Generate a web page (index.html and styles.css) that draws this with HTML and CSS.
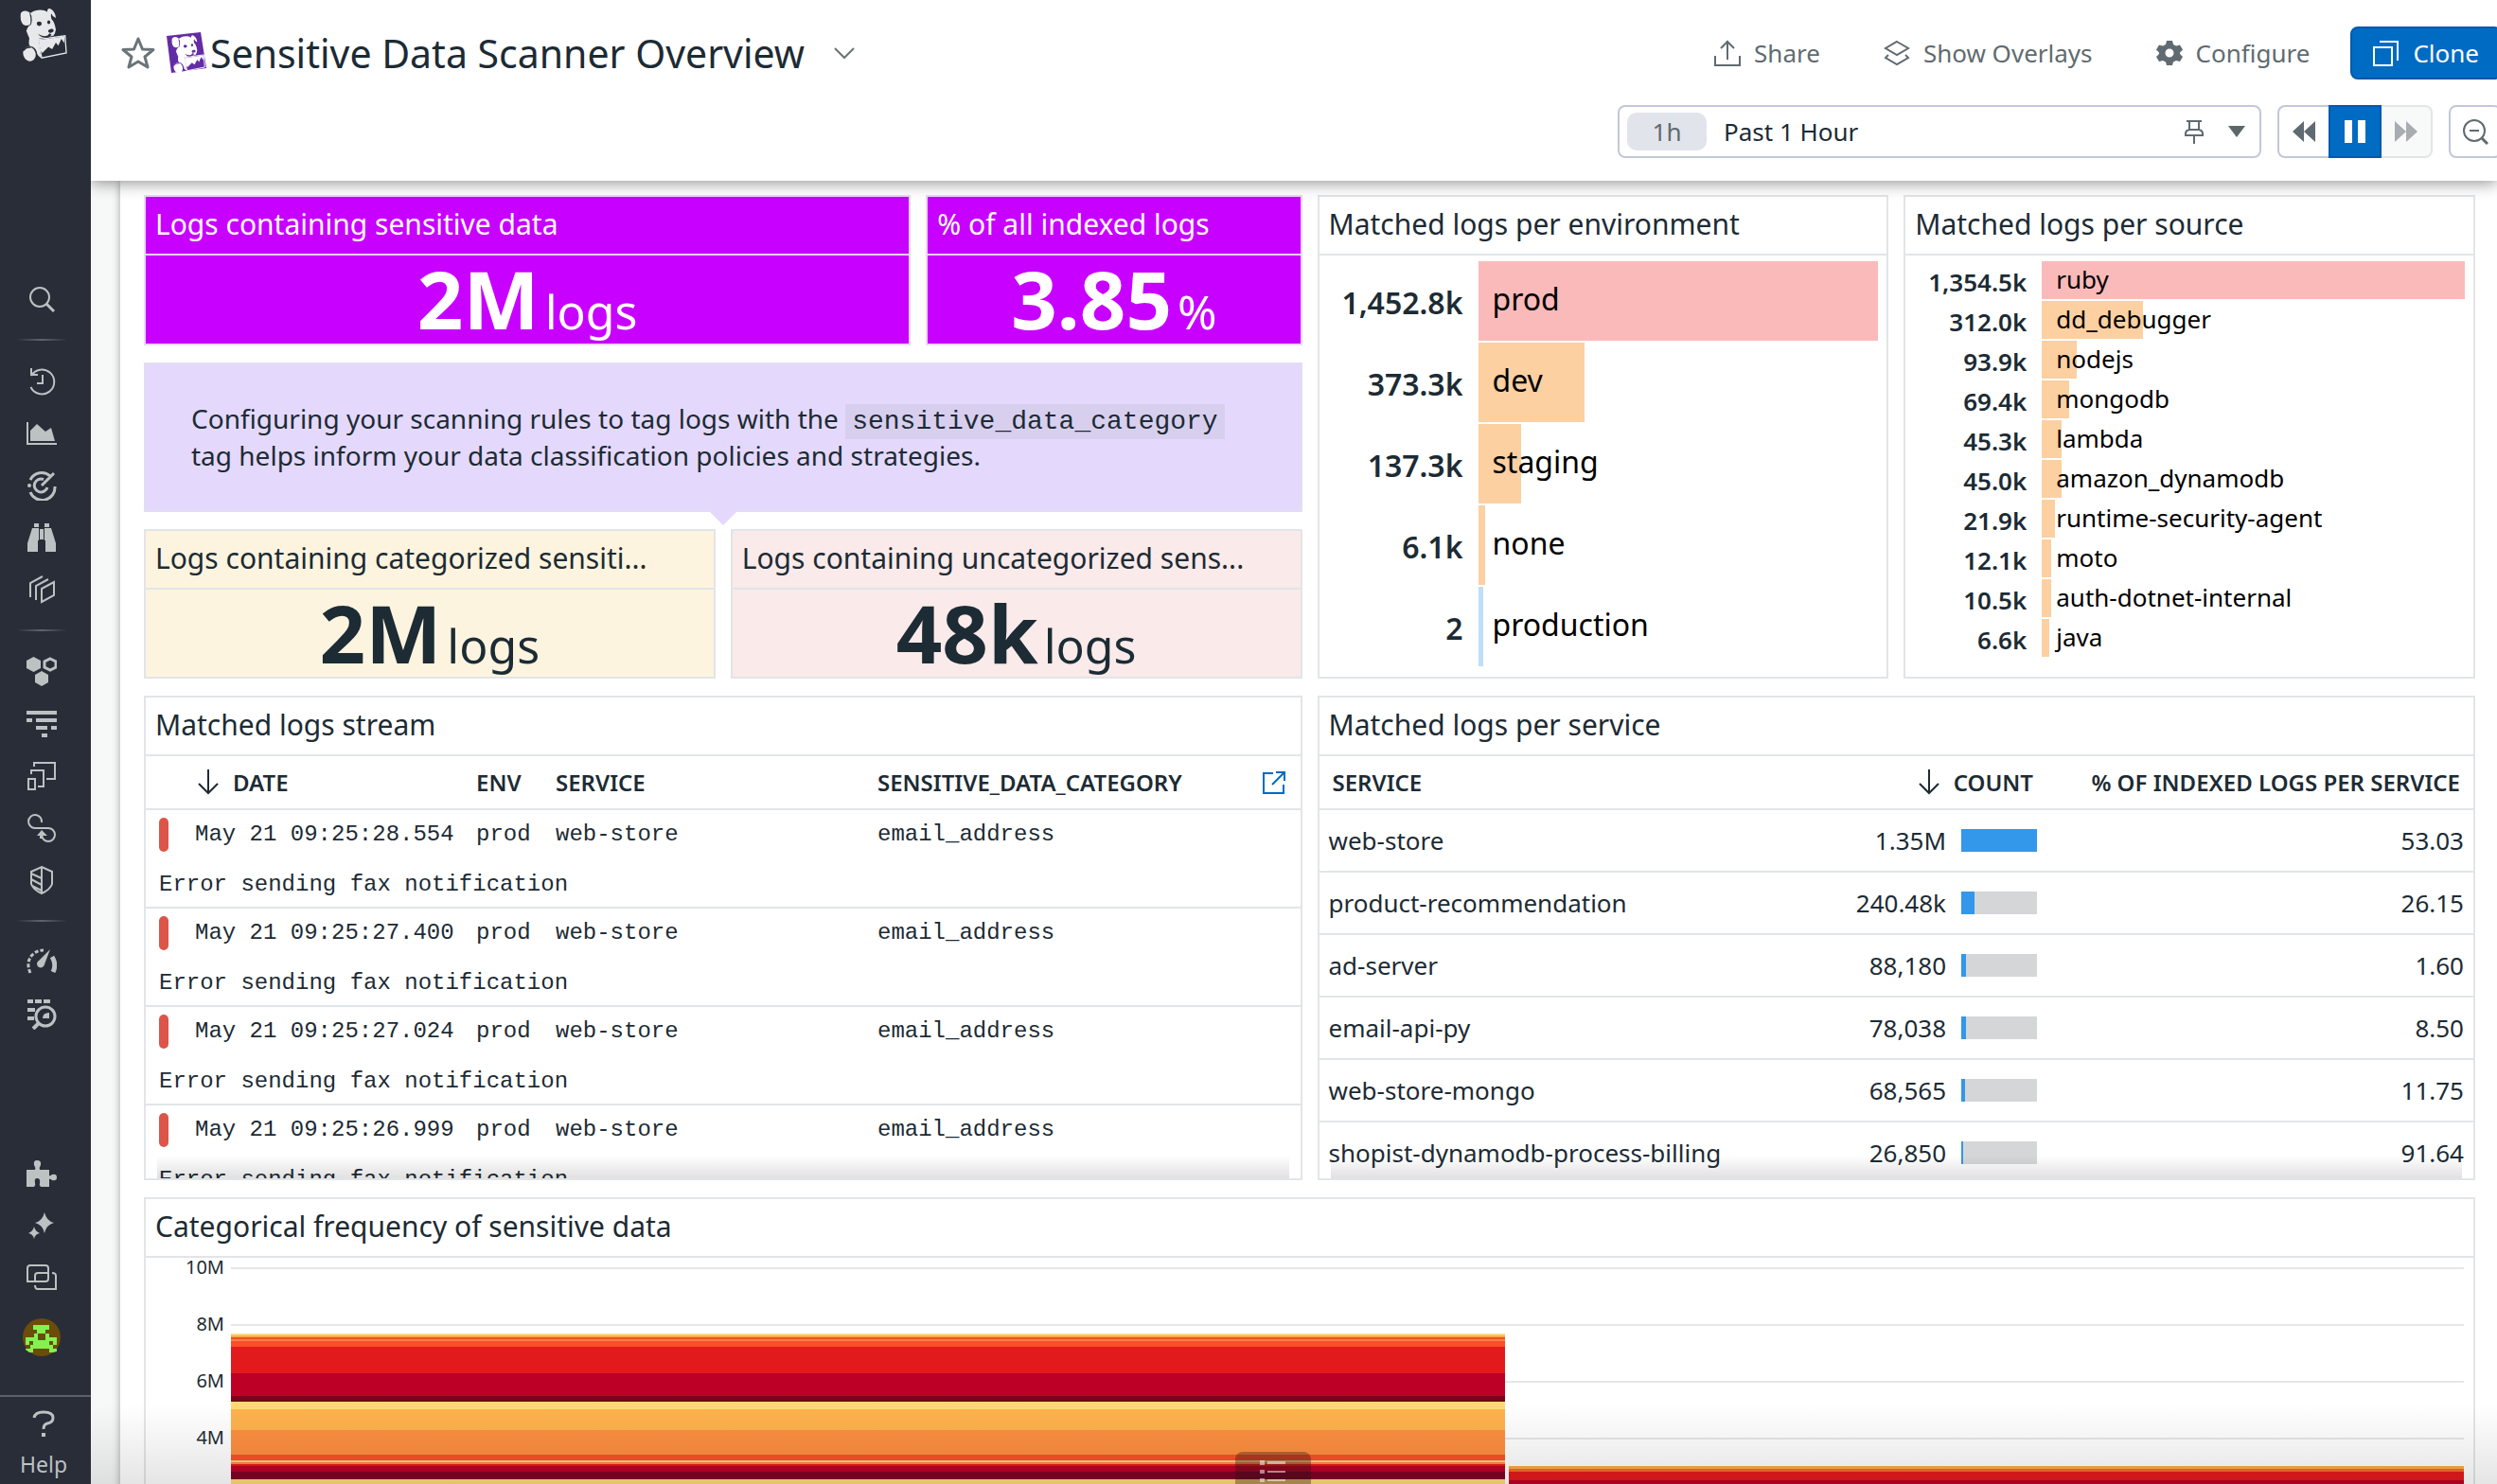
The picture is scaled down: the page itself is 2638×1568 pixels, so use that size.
FILE: index.html
```html
<!DOCTYPE html>
<html lang="en">
<head>
<meta charset="utf-8">
<title>Sensitive Data Scanner Overview</title>
<link rel="stylesheet" href="styles.css">
</head>
<body>
<svg class="defs" aria-hidden="true">
  <symbol id="dog" viewBox="60 18 160 180">
    <path fill="currentColor" d="M66 38Q74 28 86 32L98 38Q112 28 130 28Q144 28 152 34Q152 22 162 24Q178 32 180 54L170 48L166 40Q162 44 166 58Q176 66 180 92Q178 106 172 112L122 122L132 184Q118 176 118 164Q112 148 96 146Q90 138 94 120Q88 108 84 96Q88 84 96 76Q84 82 74 76Q62 62 66 38Z"/>
    <ellipse fill="currentColor" cx="94" cy="171" rx="20" ry="24" transform="rotate(-20 94 171)"/>
    <path fill="none" stroke="currentColor" stroke-width="4" d="M122 124L210 112L214 168L134 184Z"/>
    <path fill="currentColor" d="M124 126L208 114L207 136L198 122L188 144L180 134L168 156L156 148L136 168L130 160Z"/>
    <g class="dog-ink">
      <ellipse cx="126" cy="73" rx="8" ry="7"/>
      <ellipse cx="157" cy="68" rx="5" ry="6"/>
      <ellipse cx="164" cy="96" rx="9" ry="6" transform="rotate(-15 164 96)"/>
      <path d="M122 106Q136 116 152 112L160 104L166 108Q160 118 150 118Q132 120 122 106ZM94 36Q102 44 102 60Q102 76 94 80Q100 70 98 56Z"/>
      <path d="M72 160Q84 144 100 148L98 152Q84 150 76 162Z"/>
    </g>
  </symbol>
  <symbol id="arrow-down" viewBox="0 0 22 28"><path fill="none" stroke="currentColor" stroke-width="2" d="M11 1V26M1 16L11 26L21 16"/></symbol>
</svg>

<div class="app">
  <nav class="sidebar" aria-label="Main">
    <a class="brand" href="#" aria-label="Home"><svg class="brand-logo"><use href="#dog"/></svg></a>
    <div class="nav-group">
      <a class="nav-link" href="#" aria-label="Search"><svg viewBox="0 0 32 32"><circle class="ln" cx="14" cy="14" r="10"/><path class="ln3" d="M21 21L29 29"/></svg></a>
    </div>
    <div class="nav-group">
      <a class="nav-link" href="#" aria-label="Recent"><svg viewBox="0 0 32 32"><path class="ln" d="M5 10A13 13 0 1 1 4.500 22M17 9V18H11M5 2V9H12"/></svg></a>
      <a class="nav-link" href="#" aria-label="Dashboards"><svg viewBox="0 0 32 32"><path class="ln" d="M1 4V27H32"/><path d="M4 24V13L11 6L20 14L26 10L30 24Z"/></svg></a>
      <a class="nav-link" href="#" aria-label="Monitors"><svg viewBox="0 0 32 32"><path class="ln3" d="M4 10A13.500 13.500 0 0 1 25 6M30 17A13.500 13.500 0 0 1 4 23M22 18A7 7 0 1 1 18 9.500M16 16L29 3"/><circle cx="3" cy="16" r="2"/></svg></a>
      <a class="nav-link" href="#" aria-label="Watchdog"><svg viewBox="0 0 32 32"><path d="M8 1H13V5H8ZM19 1H24V5H19ZM6 6H13V19H12V31H1V22ZM26 6H19V19H20V31H31V22ZM14 7H18V18H14Z"/></svg></a>
      <a class="nav-link" href="#" aria-label="Service catalog"><svg viewBox="0 0 32 32"><path class="ln" d="M4 24V9L17 2M10 27V12L23 5M16 15L29 8V22L16 29Z"/></svg></a>
    </div>
    <div class="nav-group">
      <a class="nav-link" href="#" aria-label="Infrastructure"><svg viewBox="0 0 32 32"><path d="M7.500 0L15 4V12L7.500 16L0 12V4ZM16 15L23 19V27L16 31L9 27V19Z"/><path class="ln3" d="M25 2L31 5V11L25 14L19 11V5Z"/></svg></a>
      <a class="nav-link" href="#" aria-label="APM"><svg viewBox="0 0 32 32"><path d="M0 2H32V6H0ZM0 10H6V14H0ZM10 10H32V14H10ZM10 18H22V22H10ZM26 18H32V22H26ZM16 26H22V30H16Z"/></svg></a>
      <a class="nav-link" href="#" aria-label="Digital experience"><svg viewBox="0 0 32 32"><path class="ln" d="M8 6V2H30V19H21M5 14V10H18V27H12M2 19H9V30H2Z"/></svg></a>
      <a class="nav-link" href="#" aria-label="CI"><svg viewBox="0 0 32 32"><path class="ln" d="M16 10A7 7 0 1 0 9 16H23A7 7 0 1 1 16 23"/><path d="M11 24L16 18L22 24H17L18 27H14V24Z"/></svg></a>
      <a class="nav-link" href="#" aria-label="Security"><svg viewBox="0 0 32 32"><path class="ln" d="M16 2L27 7V20Q25 26 16 30Q7 26 5 20V7ZM16 2V30M5 9L16 14M5 15L16 21M6 22L16 27"/></svg></a>
    </div>
    <div class="nav-group">
      <a class="nav-link" href="#" aria-label="Metrics"><svg viewBox="0 0 32 32"><path fill="none" stroke="currentColor" stroke-width="3" stroke-dasharray="4 2" d="M4 27Q-1 16 6 8Q11 3 18 3"/><path d="M25 2L19 18A4 4 0 1 1 13 14Z"/><path fill="none" stroke="currentColor" stroke-width="5" d="M27 10Q32 18 28 26"/></svg></a>
      <a class="nav-link" href="#" aria-label="Logs"><svg viewBox="0 0 32 32"><path d="M1 0H7V4H1ZM9 0H16V4H9ZM18 0H25V4H18ZM1 9H9V13H1ZM1 18H8V22H1ZM17 20Q17 14 24 14V20Z"/><circle class="ln3" cx="20" cy="18" r="10"/><path fill="none" stroke="currentColor" stroke-width="4" d="M13 25L7 31"/></svg></a>
    </div>
    <div class="nav-bottom">
      <a class="nav-link" href="#" aria-label="Integrations"><svg viewBox="0 0 32 32"><path d="M0 12H9Q10 10 8 7Q7 2 11 2Q16 2 15 7Q13 10 14 12H24V18Q25 19 27 17Q32 16 32 20Q32 24 27 23Q25 21 24 22V30H15Q13 28 14 26Q15 21 11 21Q8 21 9 26Q10 28 8 30H0Z"/></svg></a>
      <a class="nav-link" href="#" aria-label="Bits AI"><svg viewBox="0 0 32 32"><path d="M19 2Q21 11 29 13Q21 15 19 24Q17 15 9 13Q17 11 19 2ZM8 17Q9 22 14 24Q9 25 8 30Q7 25 2 24Q7 22 8 17Z"/></svg></a>
      <a class="nav-link" href="#" aria-label="Notebooks"><svg viewBox="0 0 32 32"><path class="ln" d="M1 20V6Q1 3 4 3H20Q23 3 23 6V17Q23 20 20 20ZM9 20V14Q9 11 12 11H23M27 11Q31 11 31 14V28H12Q9 28 9 24"/></svg></a>
      <a class="nav-link avatar-link" href="#" aria-label="Account"><svg class="avatar" viewBox="0 0 40 40"><circle cx="20" cy="20" r="20" fill="#6b4c08"/><path fill="#83f251" fill-rule="evenodd" d="M11 7H28V12H24V16H28V20H36V28H32V32H36V35L32 36H28V32H11V36H7L3 33V32H8V28H3V20H12V16H15V12H11ZM16 16H24V23H16ZM7 24H11V28H7ZM28 24H32V28H28Z"/></svg></a>
    </div>
    <a class="help" href="#"><svg class="help-icon" viewBox="0 0 24 28"><path fill="none" stroke="currentColor" stroke-width="3" d="M2 8Q3 2 12 2Q22 2 22 8Q22 13 16 14Q12 15 12 20"/><path d="M10 24H14V28H10Z"/></svg>Help</a>
  </nav>

  <div class="page">
    <header class="topbar">
      <div class="topbar-row">
        <button class="star" type="button" aria-label="Favorite"><svg viewBox="0 0 36 36"><path fill="none" stroke="#6b7478" stroke-width="3" stroke-linejoin="round" d="M18 3L22.500 14L34 14.500L25 22L28 33L18 27L8 33L11 22L2 14.500L13.500 14Z"/></svg></button>
        <svg class="title-logo" viewBox="0 0 42 44"><path fill="#632ca6" d="M0 4L36 0L42 38L5 43Z"/><svg class="title-dog" x="4" y="2" width="38" height="42"><use href="#dog"/></svg></svg>
        <h1 class="page-title">Sensitive Data Scanner Overview</h1>
        <button class="chevron" type="button" aria-label="Dashboard menu"><svg viewBox="0 0 22 14"><path fill="none" stroke="#6b7478" stroke-width="2" d="M1 2L11 12L21 2"/></svg></button>
        <div class="actions">
          <button class="ghost" type="button"><svg class="ic" viewBox="0 0 28 28"><path class="ln" d="M1 17V27H27V17M14 21V1M7 9L14 2L21 9"/></svg>Share</button>
          <button class="ghost" type="button"><svg class="ic" viewBox="0 0 28 28"><path class="ln" d="M14 2L26 9L14 16L2 9ZM5 16L2 19L14 26L26 19L23 16"/></svg>Show Overlays</button>
          <button class="ghost" type="button"><svg class="ic" viewBox="0 0 28 28"><path fill-rule="evenodd" d="M11 1H17L18 5L21 6.500L25 5.500L28 10.500L25 13.500V15L28 18L25 23L21 22L18 23.500L17 27H11L10 23.500L7 22L3 23L0 18L3 15V13.500L0 10.500L3 5.500L7 6.500L10 5ZM14 9.500A4.500 4.500 0 1 0 14 18.500A4.500 4.500 0 1 0 14 9.500Z"/></svg>Configure</button>
          <button class="clone" type="button"><svg class="ic" viewBox="0 0 28 28"><path class="ln" d="M1 8H20V27H1ZM7 2H26V22"/></svg>Clone</button>
        </div>
      </div>
      <div class="topbar-row time-row">
        <div class="range">
          <span class="pill">1h</span>
          <select class="range-select" aria-label="Time range"><option>Past 1 Hour</option></select>
          <button class="bare" type="button" aria-label="Pin"><svg class="pin" viewBox="0 0 22 26"><path class="ln" d="M3 2H19M6 2V11M16 2V11M2 17V15Q2 12 6 11H16Q20 12 20 15V17ZM11 17V26"/></svg></button>
          <svg class="caret" viewBox="0 0 18 12"><path fill="#5c666b" d="M0 0H18L9 12Z"/></svg>
        </div>
        <div class="player">
          <button class="player-btn" type="button" aria-label="Back"><svg viewBox="0 0 24 24"><path d="M12 1V23L0 12ZM24 1V23L12 12Z"/></svg></button>
          <button class="player-btn pause" type="button" aria-label="Pause"><svg viewBox="0 0 24 24"><path d="M1 0H9V24H1ZM15 0H23V24H15Z"/></svg></button>
          <button class="player-btn off" type="button" aria-label="Forward" disabled><svg viewBox="0 0 24 24"><path d="M0 1V23L12 12ZM12 1V23L24 12Z"/></svg></button>
        </div>
        <button class="zoom-out" type="button" aria-label="Zoom out"><svg class="ic" viewBox="0 0 28 28"><circle class="ln" cx="13" cy="13" r="11"/><path class="ln" d="M8 13H18"/><path class="ln3" d="M21 21L27 27"/></svg></button>
      </div>
    </header>

    <main class="canvas">
      <div class="board">
        <section class="widget w4 vivid">
          <h2 class="widget-title">Logs containing sensitive data</h2>
          <p class="metric"><b>2M</b><span>logs</span></p>
        </section>
        <section class="widget w2 vivid">
          <h2 class="widget-title">% of all indexed logs</h2>
          <p class="metric"><b>3.85</b><span>%</span></p>
        </section>
        <section class="widget w3 tall">
          <h2 class="widget-title">Matched logs per environment</h2>
          <ul class="toplist toplist-lg">
            <li><b>1,452.8k</b><span class="track"><i class="bar red" style="width:100%"></i><span>prod</span></span></li>
            <li><b>373.3k</b><span class="track"><i class="bar" style="width:26.500%"></i><span>dev</span></span></li>
            <li><b>137.3k</b><span class="track"><i class="bar" style="width:10.700%"></i><span>staging</span></span></li>
            <li><b>6.1k</b><span class="track"><i class="bar" style="width:1.700%"></i><span>none</span></span></li>
            <li><b>2</b><span class="track"><i class="bar blue" style="width:1.200%"></i><span>production</span></span></li>
          </ul>
        </section>
        <section class="widget w3 tall">
          <h2 class="widget-title">Matched logs per source</h2>
          <ul class="toplist toplist-sm">
            <li><b>1,354.5k</b><span class="track"><i class="bar red" style="width:100%"></i><span>ruby</span></span></li>
            <li><b>312.0k</b><span class="track"><i class="bar" style="width:24%"></i><span>dd_debugger</span></span></li>
            <li><b>93.9k</b><span class="track"><i class="bar" style="width:8.200%"></i><span>nodejs</span></span></li>
            <li><b>69.4k</b><span class="track"><i class="bar" style="width:6.400%"></i><span>mongodb</span></span></li>
            <li><b>45.3k</b><span class="track"><i class="bar" style="width:4.700%"></i><span>lambda</span></span></li>
            <li><b>45.0k</b><span class="track"><i class="bar" style="width:4.700%"></i><span>amazon_dynamodb</span></span></li>
            <li><b>21.9k</b><span class="track"><i class="bar" style="width:3%"></i><span>runtime-security-agent</span></span></li>
            <li><b>12.1k</b><span class="track"><i class="bar" style="width:2.200%"></i><span>moto</span></span></li>
            <li><b>10.5k</b><span class="track"><i class="bar" style="width:2.200%"></i><span>auth-dotnet-internal</span></span></li>
            <li><b>6.6k</b><span class="track"><i class="bar" style="width:1.800%"></i><span>java</span></span></li>
          </ul>
        </section>
        <aside class="note">
          <p>Configuring your scanning rules to tag logs with the <code>sensitive_data_category</code> tag helps inform your data classification policies and strategies.</p>
        </aside>
        <section class="widget w3 cream">
          <h2 class="widget-title">Logs containing categorized sensiti...</h2>
          <p class="metric"><b>2M</b><span>logs</span></p>
        </section>
        <section class="widget w3 rose">
          <h2 class="widget-title">Logs containing uncategorized sens...</h2>
          <p class="metric"><b>48k</b><span>logs</span></p>
        </section>
        <section class="widget w6 scroller">
          <h2 class="widget-title">Matched logs stream</h2>
          <table class="stream">
            <colgroup><col class="c-bar"><col class="c-date"><col class="c-env"><col class="c-service"><col></colgroup>
            <thead><tr><th></th><th class="th-date"><svg class="sort"><use href="#arrow-down"/></svg>DATE</th><th>ENV</th><th>SERVICE</th><th><span class="th-split">SENSITIVE_DATA_CATEGORY<a class="open" href="#" aria-label="Open in Log Explorer"><svg viewBox="0 0 26 26"><path class="ln" d="M12 3H2V24H23V15M15 2H24V11M24 2L11 15"/></svg></a></span></th></tr></thead>
            <tbody>
              <tr><td><i class="level"></i></td><td>May 21 09:25:28.554</td><td>prod</td><td>web-store</td><td>email_address</td></tr>
              <tr class="msg"><td colspan="5">Error sending fax notification</td></tr>
              <tr><td><i class="level"></i></td><td>May 21 09:25:27.400</td><td>prod</td><td>web-store</td><td>email_address</td></tr>
              <tr class="msg"><td colspan="5">Error sending fax notification</td></tr>
              <tr><td><i class="level"></i></td><td>May 21 09:25:27.024</td><td>prod</td><td>web-store</td><td>email_address</td></tr>
              <tr class="msg"><td colspan="5">Error sending fax notification</td></tr>
              <tr><td><i class="level"></i></td><td>May 21 09:25:26.999</td><td>prod</td><td>web-store</td><td>email_address</td></tr>
              <tr class="msg"><td colspan="5">Error sending fax notification</td></tr>
            </tbody>
          </table>
        </section>
        <section class="widget w6 scroller">
          <h2 class="widget-title">Matched logs per service</h2>
          <table class="services">
            <colgroup><col><col class="c-count"><col class="c-pct"></colgroup>
            <thead><tr><th>SERVICE</th><th><svg class="sort"><use href="#arrow-down"/></svg>COUNT</th><th>% OF INDEXED LOGS PER SERVICE</th></tr></thead>
            <tbody>
              <tr><td>web-store</td><td><span class="count">1.35M<span class="meter"><i style="width:100%"></i></span></span></td><td>53.03</td></tr>
              <tr><td>product-recommendation</td><td><span class="count">240.48k<span class="meter"><i style="width:17.800%"></i></span></span></td><td>26.15</td></tr>
              <tr><td>ad-server</td><td><span class="count">88,180<span class="meter"><i style="width:6.500%"></i></span></span></td><td>1.60</td></tr>
              <tr><td>email-api-py</td><td><span class="count">78,038<span class="meter"><i style="width:5.800%"></i></span></span></td><td>8.50</td></tr>
              <tr><td>web-store-mongo</td><td><span class="count">68,565<span class="meter"><i style="width:5.100%"></i></span></span></td><td>11.75</td></tr>
              <tr><td>shopist-dynamodb-process-billing</td><td><span class="count">26,850<span class="meter"><i style="width:2%"></i></span></span></td><td>91.64</td></tr>
            </tbody>
          </table>
        </section>
        <section class="widget w12">
          <h2 class="widget-title">Categorical frequency of sensitive data</h2>
          <div class="chart">
            <div class="axis"><span>10M</span><span>8M</span><span>6M</span><span>4M</span><span>2M</span><span>0</span></div>
            <div class="plot">
              <div class="stack stack-a">
                <i style="height:2px;background:#f8dc80"></i><i style="height:2px;background:#fda84e"></i><i style="height:2px;background:#e4561a"></i><i style="height:2px;background:#fc7c4a"></i><i style="height:6px;background:#f94e29"></i><i style="height:28px;background:#e31a1c"></i><i style="height:24px;background:#bd0026"></i><i style="height:4px;background:#80001f"></i><i style="height:2px;background:#6e0012"></i><i style="height:8px;background:#fad973"></i><i style="height:22px;background:#feb24c"></i><i style="height:26px;background:#fd8f40"></i><i style="height:5px;background:#fa5028"></i><i style="height:1px;background:#e65a20"></i><i style="height:2px;background:#ffc885"></i><i style="height:2px;background:#fb8a3c"></i><i style="height:2px;background:#e31a1c"></i><i style="height:6px;background:#bd0026"></i><i style="height:8px;background:#800026"></i><i style="height:28px;background:#fed976"></i><i style="height:48px;background:#feb24c"></i>
              </div>
              <div class="stack stack-b">
                <i style="height:3px;background:#fda848"></i><i style="height:3px;background:#f7682a"></i><i style="height:9px;background:#e31a1c"></i><i style="height:20px;background:#bd0026"></i><i style="height:20px;background:#fed976"></i><i style="height:35px;background:#feb24c"></i>
              </div>
            </div>
          </div>
        </section>
      </div>
    </main>
    <div class="fade"></div>
    <button class="legend-tab" type="button" aria-label="Show outline"><svg viewBox="0 0 28 26"><path d="M0 2H5V7H0ZM0 12H5V16H0ZM0 21H5V25H0ZM8 3H27V6H8ZM8 13H27V15H8ZM8 22H27V24H8Z"/></svg></button>
  </div>
</div>
</body>
</html>
```
FILE: styles.css
```css
* { box-sizing: border-box; }

body {
  margin: 0;
  font-family: "Noto Sans", "Open Sans", sans-serif;
  color: #1c2b34;
  background: #fff;
}

button, select { font: inherit; color: inherit; margin: 0; padding: 0; border: 0; background: none; }
button { display: flex; align-items: center; justify-content: center; }
h1, h2, p, ul { margin: 0; padding: 0; font-weight: 400; }
ul { list-style: none; }
i { display: block; }
a { color: inherit; text-decoration: none; }
svg { display: block; fill: currentColor; }
.ln { fill: none; stroke: currentColor; stroke-width: 2; }
.ln3 { fill: none; stroke: currentColor; stroke-width: 3; }
.defs { position: absolute; width: 0; height: 0; }

.app { display: flex; height: 100vh; overflow: hidden; }

/* Sidebar */
.sidebar {
  flex: none;
  display: flex;
  flex-direction: column;
  width: 96px;
  color: #bcc1c2;
  background: #282d38;
}
.brand { height: 288px; padding: 7px 0 0 20px; color: #e6e8ea; --ink: #282d38; }
.brand-logo { width: 52px; height: 59px; }
.dog-ink { fill: var(--ink); }
.nav-group + .nav-group::before {
  content: "";
  display: block;
  width: 54px;
  height: 2px;
  margin: 15px 0 15px 17px;
  background: linear-gradient(90deg, transparent, #5f646d, transparent);
}
.nav-link { display: flex; align-items: center; justify-content: center; height: 55px; padding-right: 8px; }
.nav-link svg { width: 32px; height: 32px; }
.nav-bottom { margin-top: auto; }
.nav-link.avatar-link { height: 72px; }
.nav-link .avatar { width: 40px; height: 40px; }
.help {
  display: flex;
  flex-direction: column;
  align-items: center;
  gap: 12px;
  height: 94px;
  margin-top: 25px;
  padding: 14px 4px 0 0;
  border-top: 2px solid #5b606a;
  font-size: 23px;
  line-height: 34px;
}
.help-icon { width: 24px; height: 28px; }

/* Top bar */
.page { position: relative; flex: 1; min-width: 0; display: flex; flex-direction: column; overflow: hidden; }
.topbar {
  position: relative;
  z-index: 1;
  display: flex;
  flex-direction: column;
  gap: 27px;
  padding: 28px 0 24px 32px;
  background: #fff;
  box-shadow: 0 2px 16px rgba(0, 0, 0, .45);
}
.topbar-row { display: flex; align-items: center; height: 56px; margin-right: -5px; }
.star svg { width: 36px; height: 36px; }
.title-logo { width: 42px; height: 44px; margin: 0 4px 0 12px; overflow: visible; }
.title-dog { color: #fff; --ink: #632ca6; }
.page-title { font-size: 41px; line-height: 56px; }
.chevron { margin-left: 31px; }
.chevron svg { width: 22px; height: 14px; }
.actions { display: flex; gap: 19px; margin-left: auto; font-size: 26px; color: #5f6b70; }
.ghost, .clone { height: 56px; gap: 14px; padding: 0 24px; }
.clone { color: #fff; background: #006bc2; border: 2px solid #0059ad; border-radius: 8px; padding: 0 22px; }
.ic { width: 28px; height: 28px; }
.time-row { justify-content: flex-end; gap: 17px; font-size: 26px; color: #5f6b70; }
.range {
  display: flex;
  align-items: center;
  width: 680px;
  height: 56px;
  padding: 0 15px 0 8px;
  border: 2px solid #c3c7d9;
  border-radius: 8px;
}
.pill { width: 84px; border-radius: 10px; background: #e1e4eb; line-height: 40px; text-align: center; }
.range-select { flex: 1; height: 40px; margin-left: 18px; appearance: none; color: #1c2b34; }
.pin { width: 22px; height: 26px; }
.caret { width: 18px; height: 12px; margin-left: 25px; }
.player { display: flex; width: 164px; height: 56px; }
.player-btn { flex: 1; border: 2px solid #c3c7d9; }
.player-btn svg { width: 24px; height: 24px; }
.player-btn:first-child { border-right: 0; border-radius: 8px 0 0 8px; }
.pause { color: #fff; background: #006bc2; border-color: #0059ad; }
.off { color: #a7adb0; background: #f8f9f9; border-color: #e3e5e6; border-left: 0; border-radius: 0 8px 8px 0; }
.zoom-out { width: 56px; height: 56px; border: 2px solid #c3c7d9; border-radius: 8px; }

/* Board */
.canvas { flex: 1; min-height: 0; overflow: hidden; padding-left: 31px; background: #f7f8f8; }
.board {
  display: grid;
  grid-template-columns: repeat(12, minmax(0, 1fr));
  grid-template-rows: 159px 158px 158px 512px 512px;
  gap: 18px 16px;
  padding: 15px 23px 18px 25px;
  background: #fff;
  box-shadow: 0 0 8px rgba(0, 0, 0, .35);
}
.widget { position: relative; display: flex; flex-direction: column; overflow: hidden; border: 2px solid #e2e5e8; background: #fff; }
.w2 { grid-column: span 2; }
.w3 { grid-column: span 3; }
.w4 { grid-column: span 4; }
.w6 { grid-column: span 6; }
.w12 { grid-column: span 12; }
.tall { grid-row: span 3; }
.widget-title {
  flex: none;
  padding: 0 10px 2px;
  border-bottom: 2px solid #e2e5e8;
  font-size: 30px;
  line-height: 58px;
  white-space: nowrap;
}
.vivid { color: #fff; background: #c800ff; border-color: #ecd9f5; }
.vivid .widget-title { border-color: #f1cdfb; }
.cream { background: #fdf4df; }
.rose { background: #faeaea; }
.metric { display: flex; align-items: baseline; justify-content: center; gap: 6px; line-height: 90px; }
.metric b { font-size: 85px; }
.metric span { font-size: 50px; line-height: 50px; }

.note {
  position: relative;
  grid-column: span 6;
  display: flex;
  align-items: center;
  padding: 0 48px;
  border: 2px solid #e2def2;
  background: #e4d9fc;
  font-size: 28px;
  line-height: 39px;
}
.note::after {
  content: "";
  position: absolute;
  left: 50%;
  top: 100%;
  margin-left: -16px;
  border: 16px solid transparent;
  border-top-color: #e4d9fc;
  border-bottom: 0;
}
.note code { padding: 3px 7px; background: #d8cfef; font-family: "Liberation Mono", monospace; line-height: 28px; }

/* Top lists */
.toplist { display: flex; flex-direction: column; gap: 2px; padding: 6px 9px 0 0; }
.toplist li { display: flex; gap: 16px; }
.toplist b { flex: none; padding-top: 4px; text-align: right; font-weight: 600; }
.track { position: relative; flex: 1; padding-left: 15px; color: #000; }
.track span { position: relative; }
.bar { position: absolute; left: 0; top: 0; bottom: 0; background: #fcd0a1; }
.red { background: #fbbaba; }
.blue { background: #bfdef8; }
.toplist-lg { font-size: 32px; line-height: 80px; }
.toplist-lg li { height: 84px; }
.toplist-lg b { width: 152px; }
.toplist-sm { font-size: 26px; line-height: 38px; }
.toplist-sm li { height: 40px; }
.toplist-sm b { width: 128px; padding-top: 3px; }

/* Tables */
table { width: 100%; border-collapse: collapse; table-layout: fixed; }
th, td { padding: 0; text-align: left; white-space: nowrap; }
th { height: 56px; border-bottom: 2px solid #e2e5e8; font-size: 24px; font-weight: 600; line-height: 34px; }
.sort { display: inline-block; width: 22px; height: 28px; margin-right: 15px; vertical-align: -4px; }
.scroller::after {
  content: "";
  position: absolute;
  left: 12px;
  right: 12px;
  bottom: 0;
  height: 24px;
  background: linear-gradient(transparent, rgba(0, 0, 0, .12));
}
.stream tbody { font-family: "Liberation Mono", monospace; font-size: 24px; }
.stream td { height: 52px; }
.c-bar { width: 52px; }
.c-date { width: 297px; }
.c-env { width: 84px; }
.c-service { width: 340px; }
.th-date { padding-left: 3px; }
.th-split { display: flex; align-items: center; justify-content: space-between; padding-right: 15px; }
.open { color: #006bc2; }
.open svg { width: 26px; height: 26px; }
.level { width: 10px; height: 36px; margin-left: 14px; border-radius: 5px; background: #dc5548; }
.stream .msg td { padding: 4px 0 0 14px; border-bottom: 2px solid #e2e5e8; }
.services td { height: 66px; padding: 0 10px; border-bottom: 2px solid #e2e5e8; font-size: 26px; }
.services th { padding: 0 14px; }
.services th + th, .services td + td { text-align: right; }
.c-count { width: 300px; }
.c-pct { width: 451px; }
.count { display: flex; align-items: center; justify-content: flex-end; gap: 16px; }
.meter { width: 80px; height: 24px; background: #d5d6d8; }
.meter i { height: 100%; background: #3397ea; }

/* Frequency chart */
.chart { display: flex; gap: 7px; padding: 10px 10px 0 0; }
.axis { display: flex; flex-direction: column; width: 83px; margin-top: -15px; font-size: 20px; text-align: right; }
.axis span { height: 60px; line-height: 30px; }
.plot {
  flex: 1;
  display: flex;
  align-items: flex-end;
  gap: 4px;
  height: 300px;
  background: repeating-linear-gradient(#e4e6e8 0 2px, transparent 2px 60px);
}
.stack-a { flex: 4; }
.stack-b { flex: 3; }

.fade { position: absolute; z-index: 1; inset: auto 0 0 0; height: 84px; background: linear-gradient(transparent, rgba(0, 0, 0, .1)); pointer-events: none; }
.legend-tab {
  position: absolute;
  z-index: 2;
  left: 50%;
  bottom: 0;
  width: 80px;
  height: 34px;
  margin-left: -62px;
  padding-top: 6px;
  border-radius: 8px 8px 0 0;
  color: rgba(255, 255, 255, .5);
  background: rgba(40, 20, 20, .35);
}
.legend-tab svg { width: 28px; height: 26px; }
```
